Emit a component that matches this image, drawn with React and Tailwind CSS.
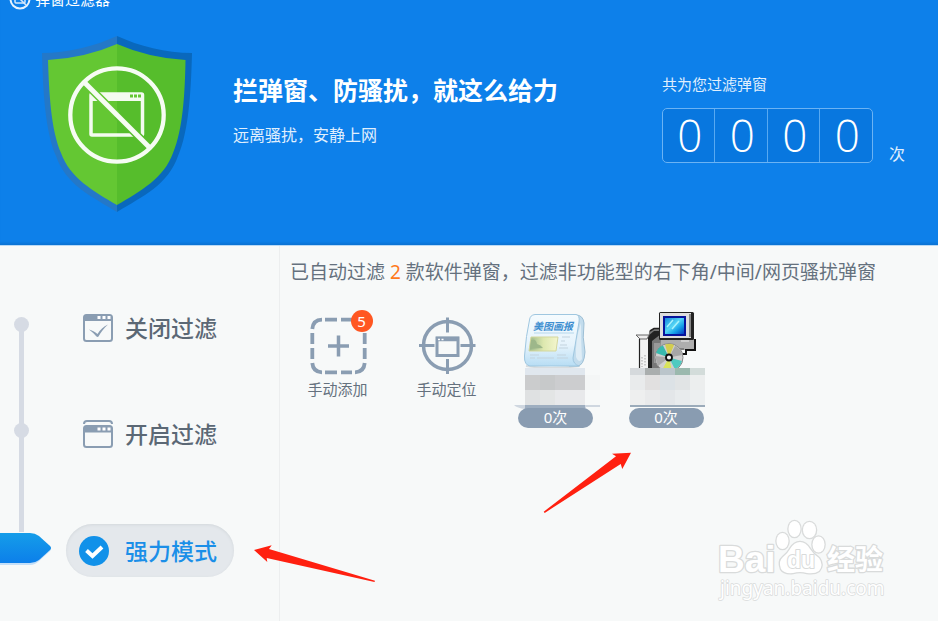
import React from "react";

const MENU_TEXT = "text-[23px] leading-[30px] font-medium";

function ShieldIcon() {
  return (
    <svg width="152" height="178" viewBox="41 35 152 178" aria-hidden="true">
      <path d="M117 36C95 46 68 53 42 53C43 90 45 131 56 156C66 185 91 196 117 212Z" fill="#2478c8" />
      <path d="M117 36C139 46 166 53 192 53C191 90 189 131 178 156C168 185 143 196 117 212Z" fill="#0968bd" />
      <path d="M117 44Q85 58 48 60C49 92 51 130 61 153C70 178 93 191 117 205Z" fill="#64c733" />
      <path d="M117 44Q149 58 185.500 60C185 92 183 130 173 153C164 178 141 191 117 205Z" fill="#56bd2c" />
      <rect x="91" y="94" width="51.500" height="41" rx="1" fill="none" stroke="#f4fbf0" strokeWidth="3.500" />
      <rect x="90" y="93" width="53" height="8" fill="#f4fbf0" />
      <path d="M130 96h3M134 96h3M138 96h3" stroke="#64c733" strokeWidth="3" />
      <path d="M86 84L117 115" stroke="#64c733" strokeWidth="8" />
      <path d="M117 115L147 145" stroke="#56bd2c" strokeWidth="8" />
      <path d="M84 82L149 147" stroke="#f6fcf3" strokeWidth="5" />
      <circle cx="117" cy="115" r="46.700" fill="none" stroke="#f6fcf3" strokeWidth="4.300" />
    </svg>
  );
}

function LogoIcon() {
  return (
    <svg width="22" height="22" viewBox="0 0 22 22" fill="none" aria-hidden="true">
      <circle cx="11" cy="11" r="9.500" stroke="#e6f2fd" strokeWidth="2" />
      <rect x="6" y="7" width="10" height="8" rx="1" stroke="#d5e8fb" strokeWidth="1.500" />
      <path d="M5 5L17 17" stroke="#d5e8fb" strokeWidth="1.500" />
    </svg>
  );
}

function CloseFilterIcon() {
  return (
    <svg width="30" height="28" viewBox="0 0 30 28" fill="none" aria-hidden="true">
      <rect x="1" y="1" width="28" height="26" rx="2.500" stroke="#8a9db2" strokeWidth="2" />
      <path d="M1 7V3Q1 1 3 1H27Q29 1 29 3V7Z" fill="#8a9db2" />
      <path d="M14.500 3.500h3M19.500 3.500h3M24.500 3.500h3" stroke="#fff" strokeWidth="3" />
      <path d="M6 15.500C9 16 12 18 14.500 20C17 16 20.500 12.500 25 10.500C21 14 18 18 15.500 22.500Q14.500 23.500 13 22Q10 18.500 6 15.500Z" fill="#8a9db2" />
    </svg>
  );
}

function OpenFilterIcon() {
  return (
    <svg width="30" height="28" viewBox="0 0 30 28" fill="none" aria-hidden="true">
      <path d="M1 4Q1 1 4 1H26Q29 1 29 4" stroke="#8a9db2" strokeWidth="2" />
      <rect x="1" y="6" width="28" height="21" rx="2.500" stroke="#8a9db2" strokeWidth="2" />
      <path d="M1 12.500V8Q1 6 3 6H27Q29 6 29 8V12.500Z" fill="#8a9db2" />
      <path d="M14.500 9h3M19.500 9h3M24.500 9h3" stroke="#fff" strokeWidth="3" />
    </svg>
  );
}

function CheckIcon() {
  return (
    <svg width="30" height="30" viewBox="0 0 30 30" fill="none" aria-hidden="true">
      <circle cx="15" cy="15" r="15" fill="#1191e9" />
      <path d="M7.500 14.500L13.500 20L23 11" stroke="#fff" strokeWidth="4" />
    </svg>
  );
}

function AddIcon() {
  return (
    <svg width="64" height="64" viewBox="306 312 64 64" fill="none" stroke="#8a9db2" strokeWidth="3.800" aria-hidden="true">
      <path d="M325 319.700h12M341 319.700h11M325 372.300h12M341 372.300h11M312.300 333v11M312.300 348v11M364.700 333v11M364.700 348v11" />
      <path d="M322 319.700Q313 320 312.300 329M355 319.700Q364 320 364.700 329M312.300 363Q313 372 322 372.300M364.700 363Q364 372 355 372.300" />
      <path d="M328 346h21M338.500 335.500v21" strokeWidth="3.500" />
    </svg>
  );
}

function LocateIcon() {
  return (
    <svg width="64" height="64" viewBox="415 312 64 64" fill="none" stroke="#8a9db2" strokeWidth="3" aria-hidden="true">
      <circle cx="447.500" cy="345.500" r="24" strokeWidth="3.500" />
      <path d="M447.500 317.500v15M447.500 359v15M419 345.500h15.500M460.500 345.500h15" />
      <rect x="437" y="338" width="21" height="17.500" />
      <path d="M436 339h23" strokeWidth="4.500" />
      <path d="M438 339.500h2M441.500 339.500h2" stroke="#fff" strokeWidth="1.500" />
    </svg>
  );
}

function Mosaic({ tiles }) {
  return tiles.map(([x, y, w, h, c], i) => <rect key={i} x={x} y={y} width={w} height={h} fill={c} shapeRendering="crispEdges" />);
}

const PAPER_TILES = [
  [525, 368, 60, 7, "#e0e7ee"],
  [525, 375, 15, 15, "#cbcccd"], [540, 375, 15, 15, "#c7c9ca"], [555, 375, 30, 15, "#cccdcf"], [585, 375, 15, 15, "#f4f6f6"],
  [525, 390, 15, 15, "#dfe1e2"], [540, 390, 15, 15, "#e3e5e5"], [555, 390, 30, 15, "#e8e9eb"],
];

const SETUP_TILES = [
  [630, 368, 15, 7, "#d5d9dc"], [645, 368, 15, 7, "#aaaeae"], [660, 368, 15, 7, "#bac5cb"], [675, 368, 15, 7, "#9bb9ae"], [690, 368, 15, 7, "#d3dcda"],
  [630, 375, 15, 15, "#e9ebec"], [645, 375, 15, 15, "#e1e0e0"], [660, 375, 15, 15, "#dce2e6"], [675, 375, 15, 15, "#e1e4e5"], [690, 375, 15, 15, "#eceeee"],
  [630, 390, 15, 15, "#eeefef"], [645, 390, 15, 15, "#e9eaeb"], [660, 390, 15, 15, "#e3e6e9"], [675, 390, 15, 15, "#e8ebed"], [690, 390, 15, 15, "#eceff0"],
  [630, 405, 75, 2, "#9babba"],
];

function PaperIcon() {
  return (
    <svg className="overflow-visible" width="92" height="96" viewBox="510 312 92 96" aria-hidden="true">
      <defs>
        <linearGradient id="sheet" x1="0" y1="0" x2="0" y2="1">
          <stop offset="0" stopColor="#f5fbfe" />
          <stop offset="0.6" stopColor="#e5f3fc" />
          <stop offset="1" stopColor="#b7ddf4" />
        </linearGradient>
        <linearGradient id="photo" x1="0" y1="0" x2="1" y2="0">
          <stop offset="0" stopColor="#9bb88b" />
          <stop offset="0.5" stopColor="#dde8af" />
          <stop offset="1" stopColor="#f4f6ce" />
        </linearGradient>
      </defs>
      <path d="M526 366Q550 370 580 366" fill="none" stroke="#d7dcdf" strokeWidth="2" />
      <path d="M576 315Q583 315 584 323Q582 337 585 352Q584 366 577 366H569Z" fill="#c2dced" stroke="#9dbfd5" />
      <path d="M535 314.500H576Q580 315 579 322L573 358Q573 364 579 366H530Q524 365 524.500 356Q526 335 529.500 320Q530 315 535 314.500Z" fill="url(#sheet)" stroke="#9fc7e0" />
      <path d="M581 323Q575 340 576 357Q579 364 582 359Q581 342 581 323Z" fill="#dfedf6" />
      <text x="533" y="330" fontSize="10" fontWeight="700" fontStyle="italic" fill="#3f8fd0" className="font-['Noto_Sans_CJK_SC',sans-serif]">美图画报</text>
      <path d="M534 333H574" stroke="#b5d7ec" />
      <path d="M531 337H558L556 351H529Z" fill="url(#photo)" stroke="#d4d79d" />
      <path d="M530 349L531 340Q536 338 537 344Q541 345 543 348Z" fill="#9db78a" />
      <path d="M562 337h8M561 341h4M560 345h7M559 348h9M530 355h9M530 358h5M537 358h17M557 355h9M557 358h11" stroke="#c3d3de" />
      <Mosaic tiles={PAPER_TILES} />
      <path d="M514 405H600V407H586V409Q555 409 535 411H525V409Q517 408 514 405Z" fill="#cfd7e0" />
      <path d="M525 405h60v4Q550 410 525 411Z" fill="#9eaec0" />
    </svg>
  );
}

function SetupIcon() {
  return (
    <svg width="92" height="96" viewBox="620 312 92 96" aria-hidden="true">
      <defs>
        <linearGradient id="screen" x1="0" y1="0" x2="1" y2="1">
          <stop offset="0" stopColor="#1487dc" />
          <stop offset="0.45" stopColor="#55d6f5" />
          <stop offset="0.7" stopColor="#159fe8" />
          <stop offset="1" stopColor="#063bc1" />
        </linearGradient>
        <clipPath id="disc">
          <rect x="650" y="340" width="40" height="28" />
        </clipPath>
      </defs>
      <path d="M649 331L655 328H661V368H648Z" fill="#777" />
      <path d="M648 336L654 331H661V334L652 341V368H648Z" fill="#222" />
      <path d="M650 331L654 328.500H660" fill="none" stroke="#222" strokeWidth="1.500" />
      <path d="M654 343h6v20h-6z" fill="#999" />
      <path d="M639 337H648V368H639Z" fill="#f2f2f2" />
      <path d="M636 335H649L647 339H640Z" fill="#ededed" stroke="#666" />
      <path d="M639.500 339V368" stroke="#222" strokeWidth="1.200" />
      <path d="M642 357v10M645 355v12" stroke="#a5a5a5" strokeDasharray="1.500 1.500" />
      <path d="M661 339H695V350H660Z" fill="#aeaeae" />
      <path d="M695 339v11h-9v4h-5" fill="none" stroke="#111" strokeWidth="2" />
      <path d="M661 349h23" stroke="#555" />
      <rect x="659" y="312" width="35" height="28" rx="1.500" fill="#222" />
      <rect x="660" y="313" width="31" height="25" fill="#dedede" />
      <path d="M690 314v23" stroke="#858585" strokeWidth="2" />
      <rect x="663" y="316" width="23" height="20" fill="#07139b" />
      <rect x="665" y="318" width="19" height="16" fill="url(#screen)" />
      <path d="M667 327l6-7M672 329l7-8" stroke="#a9f1fc" strokeWidth="1.500" />
      <path d="M681 341h8" stroke="#eee" />
      <g clipPath="url(#disc)">
        <circle cx="669" cy="357.500" r="14" fill="#cfcfcf" stroke="#888" />
        <path d="M669 357.500L665 344.500Q670 343 674 345Z" fill="#d3cd4f" />
        <path d="M669 357.500L656 353Q658 347 663 345.500Z" fill="#39b9ad" />
        <path d="M669 357.500L675 369.500Q681 366 682 361Z" fill="#4ecac0" />
        <path d="M669 357.500L662 370Q667 372 672 371Z" fill="#d9e45b" />
        <path d="M669 357.500L675 346Q681 349 682 355Z" fill="#a7a7a7" />
        <path d="M669 357.500L655 356L658 366Z" fill="#a9a9a9" />
        <circle cx="669" cy="357.500" r="3" fill="#f3f3f3" stroke="#111" strokeWidth="1.800" />
      </g>
      <Mosaic tiles={SETUP_TILES} />
    </svg>
  );
}

function Watermark() {
  return (
    <svg width="180" height="90" viewBox="712 515 180 90" aria-label="Baidu 经验 jingyan.baidu.com" role="img">
      <g fill="#fff" stroke="#d9dbdb" strokeWidth="2.600" strokeLinejoin="round" paintOrder="stroke">
        <text x="718" y="572" fontSize="37" fontWeight="700" className="font-['Liberation_Sans',sans-serif]">Bai</text>
        <ellipse cx="782.500" cy="541" rx="6" ry="8" />
        <ellipse cx="794.500" cy="529" rx="6" ry="8" />
        <ellipse cx="809.500" cy="530" rx="6.500" ry="8" />
        <ellipse cx="818.500" cy="544.500" rx="6" ry="8" />
        <path d="M800 542Q806 542 810 549Q813 554 819 558Q824 565 819 571Q815 574 807 573Q800 571 793 573Q784 574 781 569Q778 561 783 557Q788 553 790 549Q794 542 800 542Z" />
        <text x="787" y="568" fontSize="23" fontWeight="700" strokeWidth="2" className="font-['Liberation_Sans',sans-serif]">du</text>
        <text x="827" y="570" fontSize="28" fontWeight="700" className="font-['Noto_Sans_CJK_SC',sans-serif]">经验</text>
        <text x="720" y="595" fontSize="19" strokeWidth="1.500" className="font-['Noto_Sans',sans-serif]">jingyan.baidu.com</text>
      </g>
    </svg>
  );
}

function MenuButton({ icon, label, active }) {
  return (
    <button
      type="button"
      className={
        "flex h-[53px] w-[168px] items-center rounded-full " + MENU_TEXT +
        (active
          ? " gap-4 bg-[#e4e8ec] pl-[13px] text-[#1b8fe8] shadow-[inset_0_1px_3px_#d3d8dc]"
          : " gap-3 pl-[17px] text-[#5b6875]")
      }
    >
      {icon}
      <span>{label}</span>
    </button>
  );
}

function CountBadge() {
  return <span className="h-5 w-[75px] rounded-full bg-[#899cb1] text-center text-[15px] leading-[18px] text-white">0次</span>;
}

export default function App() {
  return (
    <div className="flex min-h-screen flex-col overflow-hidden bg-[#f7f9f9] font-['Noto_Sans','Noto_Sans_CJK_SC',sans-serif]">
      <header className="overflow-hidden border-b border-[#b9d9f6] bg-[#0d80ea] pb-8 text-white shadow-[inset_0_-4px_3px_-2px_#0b72d2]">
        <div className="-mt-3 flex h-[22px] items-center gap-1 pl-[9px] text-[15px] leading-[20px]">
          <LogoIcon />
          <span>弹窗过滤器</span>
        </div>
        <div className="mt-[25px] flex items-start pr-[33px] pl-[41px]">
          <ShieldIcon />
          <div className="mt-9 ml-10">
            <h1 className="text-[25px] leading-[38px] font-bold">拦弹窗、防骚扰，就这么给力</h1>
            <p className="mt-[14px] text-[16px] leading-6 text-[#e0effd]">远离骚扰，安静上网</p>
          </div>
          <div className="mt-[37px] ml-auto">
            <p className="text-[15px] leading-6 text-[#e0effd]">共为您过滤弹窗</p>
            <div className="mt-3 flex items-end gap-4">
              <div className="flex h-[55px] w-[211px] divide-x divide-[#57a9f2] rounded-[5px] border border-[#6bb3f4] bg-[#0877df] font-['Open_Sans',sans-serif] text-[44px] leading-[52px] font-light">
                {[0, 0, 0, 0].map((n, i) => (
                  <span key={i} className="flex-1 pl-[2px] text-center">{n}</span>
                ))}
              </div>
              <span className="text-[16px] leading-[18px] text-[#e0effd]">次</span>
            </div>
          </div>
        </div>
      </header>

      <div className="relative flex flex-1">
        <aside className="flex w-[280px] shrink-0 border-r border-[#eceeef]">
          <div className="flex w-[66px] flex-col pt-[71px]" aria-hidden="true">
            <span className="ml-[14px] size-[15px] rounded-full bg-[#d6dbe4]" />
            <span className="-my-px ml-[19px] h-[93px] w-[5px] bg-[#d6dbe4]" />
            <span className="ml-[14px] size-[15px] rounded-full bg-[#d6dbe4]" />
            <span className="-mt-px ml-[19px] h-[95px] w-[5px] bg-[#d6dbe4]" />
            <svg width="54" height="35" viewBox="0 0 54 35">
              <defs>
                <linearGradient id="pointer" x1="0" y1="0" x2="0" y2="1">
                  <stop offset="0" stopColor="#159de9" />
                  <stop offset="1" stopColor="#0c7fea" />
                </linearGradient>
              </defs>
              <path d="M0 2H30Q35 2 39 5L50 14Q52 17 50 19L39 29Q35 33 30 33H0Z" fill="#c4dff8" />
              <path d="M0 1H30Q35 1 39 4L50 14Q52 16 50 18L39 28Q35 31 30 31H0Z" fill="url(#pointer)" />
            </svg>
          </div>
          <nav className="flex flex-col pt-[55px]">
            <MenuButton icon={<CloseFilterIcon />} label="关闭过滤" />
            <div className="mt-[53px] mb-16">
              <MenuButton icon={<OpenFilterIcon />} label="开启过滤" />
            </div>
            <MenuButton icon={<CheckIcon />} label="强力模式" active />
          </nav>
        </aside>

        <main className="min-w-0 flex-1 pt-3 pl-[3px]">
          <p className="pl-[7px] text-[19px] leading-[28px] text-[#65717e]">
            已自动过滤 <span className="text-[#ff7a1c]">2</span> 款软件弹窗，过滤非功能型的右下角/中间/网页骚扰弹窗
          </p>
          <div className="mt-[26px] flex flex-wrap">
            <button type="button" className="flex w-[109px] flex-col items-center text-[15px] leading-[26px] text-[#65717e]">
              <span className="relative">
                <AddIcon />
                <span className="absolute -top-[2px] -right-[3px] size-[22px] rounded-full bg-[#ff5722] text-center text-[15px] leading-[22px] text-white">5</span>
              </span>
              手动添加
            </button>
            <button type="button" className="flex w-[109px] flex-col items-center text-[15px] leading-[26px] text-[#65717e]">
              <LocateIcon />
              手动定位
            </button>
            <div className="flex w-[109px] flex-col items-center">
              <PaperIcon />
              <CountBadge />
            </div>
            <div className="flex w-28 flex-col items-center">
              <SetupIcon />
              <CountBadge />
            </div>
          </div>
        </main>

        <svg className="pointer-events-none absolute top-0 left-0" width="640" height="350" viewBox="0 246 640 350" fill="#ff2010" aria-hidden="true">
          <path d="M631 452.700L612 453.700L616 456.300L543.700 511.700L544.700 512.900L620.700 464L622.300 469Z" />
          <path d="M254 550L271.700 545.300L269 549L375 580.700L374.500 581.900L266.700 558L267.300 562Z" />
        </svg>
        <div className="pointer-events-none absolute right-[46px] bottom-4">
          <Watermark />
        </div>
      </div>
    </div>
  );
}
